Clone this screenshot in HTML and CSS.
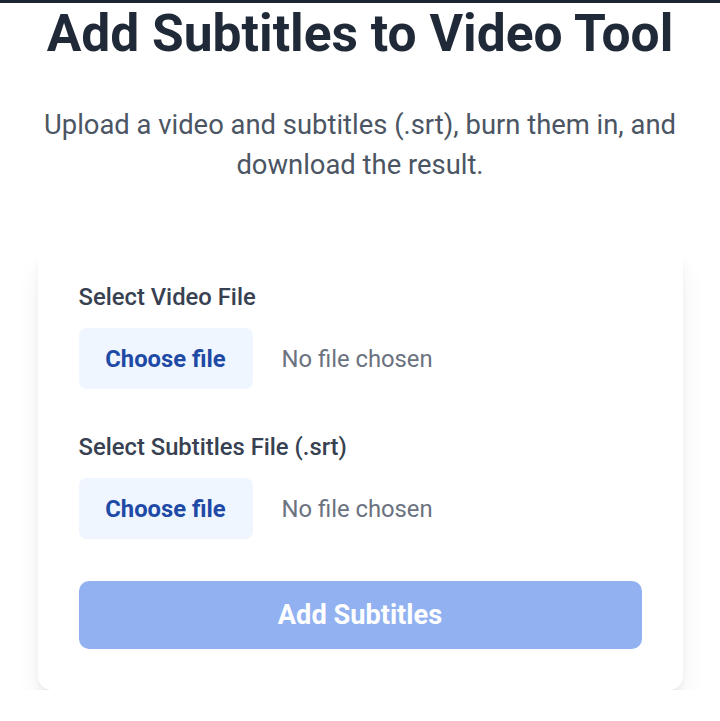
FILE: index.html
```html
<!DOCTYPE html>
<html lang="en">
<head>
<meta charset="utf-8">
<title>Add Subtitles to Video Tool</title>
<link rel="stylesheet" href="styles.css">
</head>
<body>
<div class="topbar"></div>
<main class="page">
  <h1 class="title">Add Subtitles to Video Tool</h1>
  <p class="subtitle">Upload a video and subtitles (.srt), burn them in, and download the result.</p>
  <form class="card">
    <div class="field">
      <label class="label">Select Video File</label>
      <div class="file">
        <span class="file-btn">Choose file</span>
        <span class="file-name">No file chosen</span>
      </div>
    </div>
    <div class="field">
      <label class="label">Select Subtitles File (.srt)</label>
      <div class="file">
        <span class="file-btn">Choose file</span>
        <span class="file-name">No file chosen</span>
      </div>
    </div>
    <button type="button" class="submit">Add Subtitles</button>
  </form>
</main>
</body>
</html>
```
FILE: styles.css
```css
* { box-sizing: border-box; }
html, body { margin: 0; padding: 0; background: #ffffff; }
body { font-family: Roboto, "Liberation Sans", sans-serif; }
.topbar { height: 3px; background: #1f2633; }
.page { display: flex; flex-direction: column; align-items: center; }
.title {
  margin: 0;
  padding-top: 1px;
  font-size: 51.5px;
  line-height: 60px;
  font-weight: 700;
  color: #1f2937;
  text-align: center;
}
.subtitle {
  margin: 41px 0 0;
  max-width: 660px;
  font-size: 27.4px;
  line-height: 40px;
  color: #4b5563;
  text-align: center;
}
.card {
  margin-top: 59px;
  width: 645px;
  background: #fff;
  border-radius: 14px;
  box-shadow: 0 18px 28px -6px rgba(0,0,0,0.1), 0 6px 10px -4px rgba(0,0,0,0.08);
  padding: 38px 41px 41px;
  display: flex;
  flex-direction: column;
}
.field { display: flex; flex-direction: column; gap: 16px; margin-bottom: 43px; }
.field + .field { margin-bottom: 42px; }
.label { font-size: 23.8px; line-height: 30px; font-weight: 500; color: #374151; }
.file { display: flex; align-items: center; gap: 29px; }
.file-btn {
  width: 174px; height: 61px;
  display: flex; align-items: center; justify-content: center;
  background: #eff6ff;
  color: #1e4aa6;
  font-size: 23.8px; font-weight: 700;
  border-radius: 8px;
}
.file-name { font-size: 23.8px; color: #6b7280; }
.submit {
  height: 68px;
  border: 0;
  border-radius: 10px;
  background: #92b1f1;
  color: #fff;
  font-family: inherit;
  font-size: 27.2px;
  font-weight: 700;
}
```
